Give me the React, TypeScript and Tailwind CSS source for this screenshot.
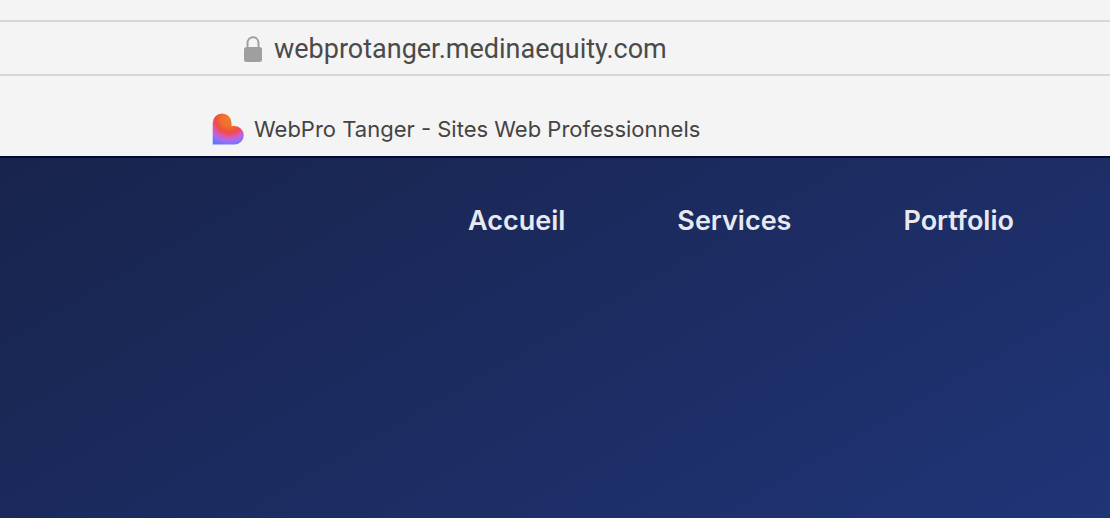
const navItems = [
  { label: "Accueil", href: "#accueil" },
  { label: "Services", href: "#services" },
  { label: "Portfolio", href: "#portfolio" },
];

const LockIcon = () => (
  <svg width="18" height="26" viewBox="0 0 18 26" aria-hidden="true">
    <path
      d="M3.5 12V7.5C3.5 3.5 6 1.2 9 1.2S14.5 3.5 14.5 7.5V12"
      fill="none"
      stroke="#9f9f9f"
      strokeWidth="2"
    />
    <rect y="11" width="18" height="15" rx="2.5" fill="#9f9f9f" />
  </svg>
);

const SiteIcon = () => (
  <svg width="32" height="32" viewBox="0 0 32 32" aria-hidden="true">
    <defs>
      <radialGradient
        id="heart"
        cx="17"
        cy="6"
        r="29"
        gradientUnits="userSpaceOnUse"
      >
        <stop offset="0" stopColor="#ee7b2b" />
        <stop offset="0.25" stopColor="#ef7030" />
        <stop offset="0.46" stopColor="#f04c40" />
        <stop offset="0.6" stopColor="#e055a0" />
        <stop offset="0.75" stopColor="#a86cf0" />
        <stop offset="0.95" stopColor="#5a78fa" />
      </radialGradient>
    </defs>
    <path
      d="M0.7 10A9.4 9.4 0 0 1 19.5 10V13H22.5A9.3 9.3 0 0 1 22.5 31.6H0.7Z"
      fill="url(#heart)"
    />
  </svg>
);

const AddressBar = () => (
  <div className="mt-5 flex h-14 items-center gap-3 border-y-2 border-[#d6d6d6] pl-[244px] pr-6 pt-0.5">
    <LockIcon />
    <input
      type="text"
      aria-label="Adresse"
      defaultValue="webprotanger.medinaequity.com"
      className="min-w-0 flex-1 bg-transparent font-['Roboto','Liberation_Sans',sans-serif] text-[27px] leading-8 text-[#4a4a4a] outline-none"
    />
  </div>
);

const TabBar = () => (
  <div className="flex h-20 items-end gap-2.5 pb-[11px] pl-[212px] pr-6">
    <SiteIcon />
    <span className="text-[22px] leading-8 text-[#444444]">
      WebPro Tanger - Sites Web Professionnels
    </span>
  </div>
);

const App = () => {
  return (
    <div className="flex min-h-screen flex-col bg-[#f4f4f4] font-['Inter','Liberation_Sans',sans-serif]">
      <header>
        <AddressBar />
        <TabBar />
      </header>
      <main className="flex-1 border-t-2 border-[#050a35] bg-linear-150 from-[#18244c] to-[#203477]">
        <nav className="flex gap-28 pl-[468px] pt-[43px]">
          {navItems.map((item) => (
            <a
              key={item.href}
              href={item.href}
              className="text-[27px] font-semibold leading-10 text-[#e8e9ef]"
            >
              {item.label}
            </a>
          ))}
        </nav>
      </main>
    </div>
  );
};

export default App;
